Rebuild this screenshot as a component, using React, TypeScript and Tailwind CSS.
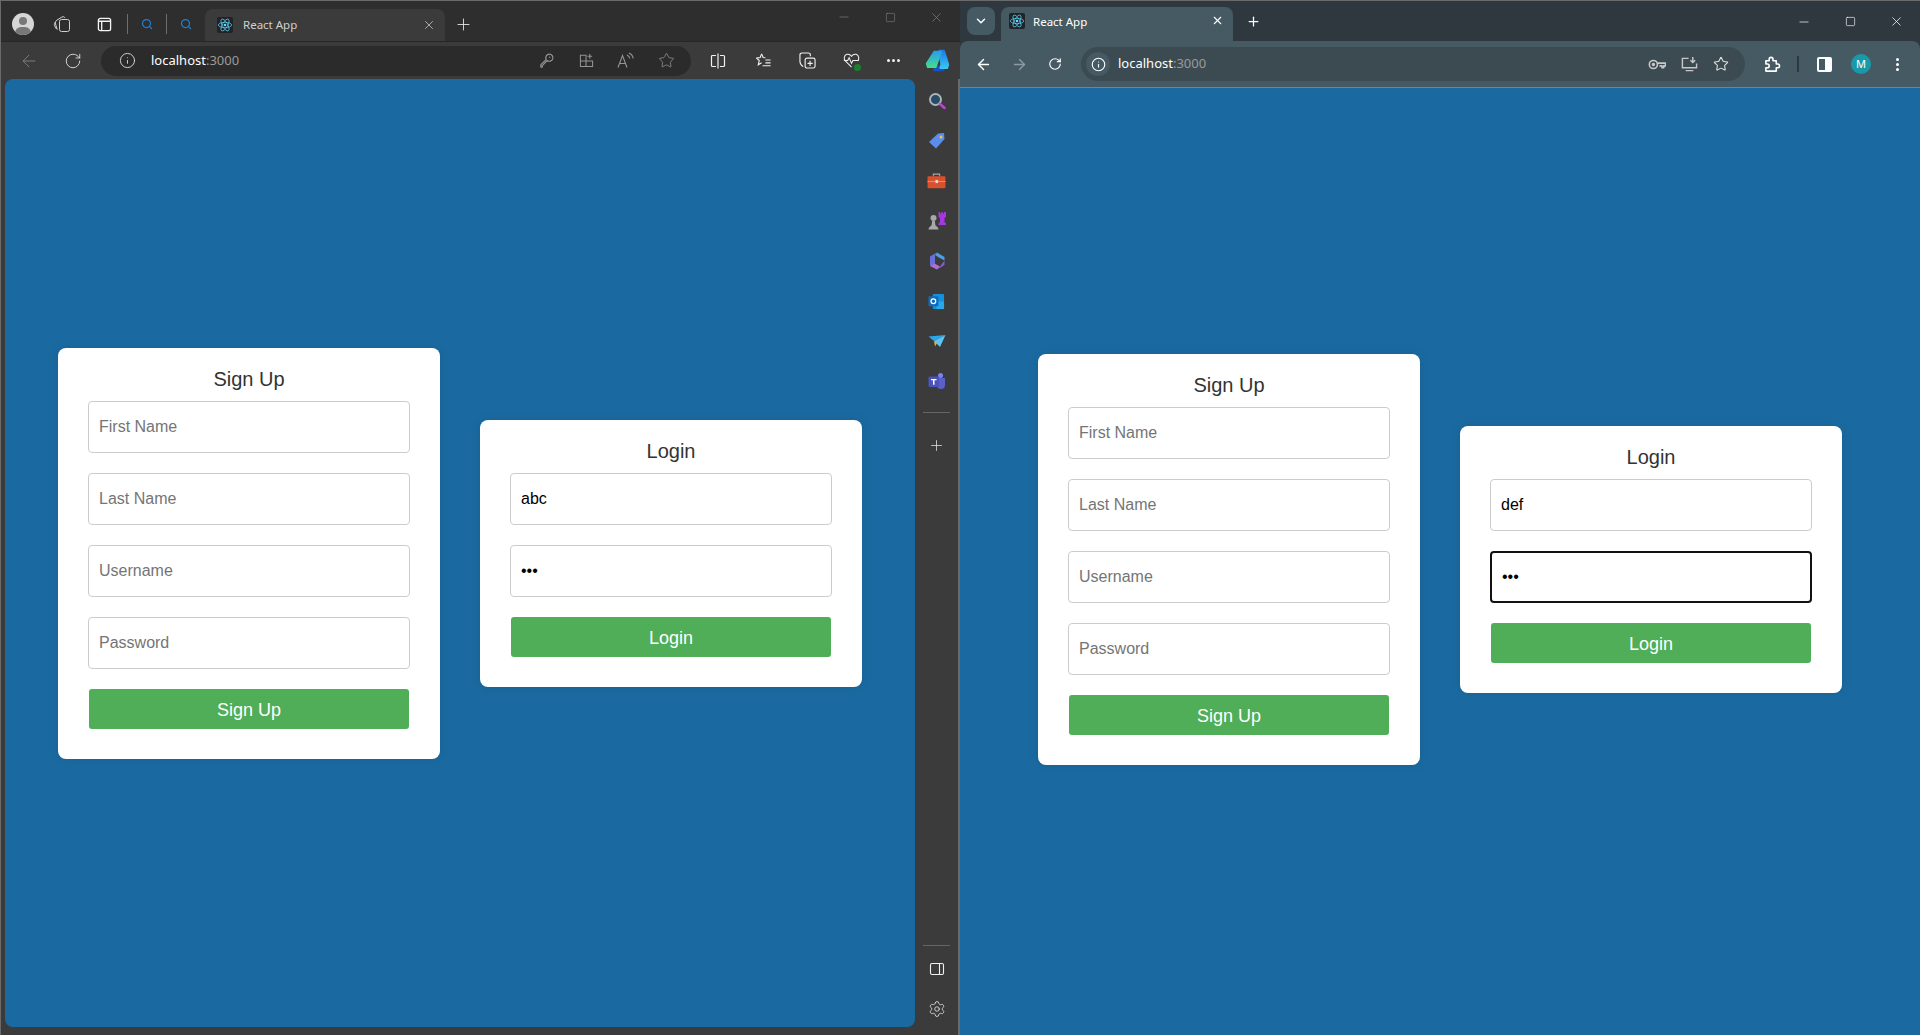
import React from 'react';
import { ArrowLeft, ArrowRight, ChevronDown, Info, Minus, Plus, RotateCw, Search, Settings, Square, Star, X } from 'lucide-react';

const sans = 'font-["Liberation_Sans",Arial,sans-serif]';
const ui = 'font-["Noto_Sans",sans-serif]';

function ReactIcon() {
  return (
    <div className="w-4 h-4 shrink-0 bg-[#20232a] rounded-[2px] flex items-center justify-center">
      <svg viewBox="-12 -12 24 24" className="w-4 h-4" fill="none" stroke="#61dafb" strokeWidth="1">
        <circle r="2" fill="#61dafb" stroke="none" />
        <ellipse rx="10" ry="4" />
        <ellipse rx="10" ry="4" transform="rotate(60)" />
        <ellipse rx="10" ry="4" transform="rotate(120)" />
      </svg>
    </div>
  );
}

function Box({ w, children }: { w: string; children?: React.ReactNode }) {
  return <div className={`${w} h-full shrink-0 flex items-center justify-center`}>{children}</div>;
}

function Field({ placeholder, value, type = 'text', focused = false }: { placeholder?: string; value?: string; type?: string; focused?: boolean }) {
  return (
    <input
      type={type}
      placeholder={placeholder}
      defaultValue={value}
      className={`w-full h-[52px] px-[10px] rounded-[4px] bg-white text-[16px] text-black placeholder:text-[#757575] outline-none ${sans} ${
        focused ? 'border-2 border-[#111111]' : 'border border-[#cccccc]'
      }`}
    />
  );
}

function Card({ title, children }: { title: string; children: React.ReactNode }) {
  return (
    <div className="w-[382px] px-[30px] pt-[20px] pb-[30px] bg-white rounded-[8px] shadow-[0_0_10px_rgba(0,0,0,0.1)]">
      <h2 className={`text-[20px] leading-[23px] mb-[10px] text-center text-[#333333] ${sans}`}>{title}</h2>
      <div className="flex flex-col gap-[20px]">{children}</div>
    </div>
  );
}

function Submit({ label }: { label: string }) {
  return (
    <button className={`mx-px h-[40px] pt-[3px] rounded-[3px] bg-[#4fae57] text-white text-[18px] ${sans}`}>{label}</button>
  );
}

function Forms({ user, focused }: { user: string; focused: boolean }) {
  return (
    <div className="flex items-center justify-center gap-[40px]">
      <Card title="Sign Up">
        <Field placeholder="First Name" />
        <Field placeholder="Last Name" />
        <Field placeholder="Username" />
        <Field placeholder="Password" />
        <Submit label="Sign Up" />
      </Card>
      <Card title="Login">
        <Field value={user} />
        <Field value="abc" type="password" focused={focused} />
        <Submit label="Login" />
      </Card>
    </div>
  );
}

function Url({ className }: { className: string }) {
  return (
    <span className={`text-[13px] text-white ${ui} ${className}`}>
      localhost<span className="text-[#9a9a9a]">:3000</span>
    </span>
  );
}

function SidebarIcon({ children }: { children: React.ReactNode }) {
  return <div className="h-[40px] flex items-center justify-center">{children}</div>;
}

function EdgeWindow() {
  return (
    <div className="w-[960px] h-full flex flex-col bg-[#3b3b3b] border-l border-t border-[#6a6a6a]">
      {/* tab strip */}
      <div className="h-[40px] shrink-0 flex items-end bg-[#2e2e2e] pl-[11px]">
        <div className="flex h-[32px] items-center flex-1 -translate-y-px">
          <Box w="w-[22px]">
            <div className="relative w-[22px] h-[22px] rounded-full bg-[#d6d6d6] overflow-hidden">
              <div className="absolute left-[7px] top-[4px] w-2 h-2 rounded-full bg-[#787878]" />
              <div className="absolute left-[3px] top-[14px] w-4 h-3 rounded-full bg-[#787878]" />
            </div>
          </Box>
          <Box w="w-[7px]" />
          <Box w="w-[42px]">
            <svg viewBox="0 0 18 18" className="w-[18px] h-[18px]" fill="none" stroke="#d0d0d0" strokeWidth="1">
              <rect x="6.500" y="4.500" width="10" height="12" rx="2" />
              <path d="M4.500 14.500c-1.200-.5-2-1.500-3-4-.5-1.500 0-2.500 1-3.500M4 14l-1.500-5c-.5-1.500 0-3 1.500-4l5-3c1.500-.8 2.500 0 3 1" />
            </svg>
          </Box>
          <Box w="w-[43px]">
            <svg viewBox="0 0 16 16" className="w-[15px] h-[15px]" fill="none" stroke="#f4f4f4" strokeWidth="1.400">
              <rect x="1.500" y="1.500" width="13" height="13" rx="2" />
              <path d="M1.500 4.500h13M5 4.500v10" />
            </svg>
          </Box>
          <div className="w-px h-[20px] bg-[#6f6f6f] ml-[1px]" />
          <Box w="w-[38px]"><Search size={12} strokeWidth={2.500} className="text-[#1f7fd0]" /></Box>
          <div className="w-px h-[20px] bg-[#6f6f6f]" />
          <Box w="w-[38px]"><Search size={12} strokeWidth={2.500} className="text-[#1f7fd0]" /></Box>
          <div className="w-[240px] h-[32px] shrink-0 -mb-[2px] rounded-t-[8px] bg-[#3b3b3b] flex items-center pl-[12px] pr-[9px]">
            <ReactIcon />
            <span className={`ml-[10px] text-[11.500px] text-[#cfcfcf] flex-1 ${ui}`}>React App</span>
            <X size={14} strokeWidth={1.300} className="text-[#cfcfcf]" />
          </div>
          <Box w="w-[36px]"><Plus size={19} strokeWidth={1.100} className="text-[#e8e8e8]" /></Box>
          <div className="flex-1" />
        </div>
        <div className="flex h-[32px] self-start items-center">
          <Box w="w-[46px]"><Minus size={14} strokeWidth={1} className="text-[#8a8a8a]" /></Box>
          <Box w="w-[46px]"><Square size={11} strokeWidth={1.200} className="text-[#8a8a8a]" /></Box>
          <Box w="w-[46px]"><X size={15} strokeWidth={1} className="text-[#8a8a8a]" /></Box>
          <Box w="w-[1px]" />
        </div>
      </div>

      {/* toolbar */}
      <div className="h-[38px] shrink-0 flex items-center border-t border-[#262626] bg-[#3b3b3b]">
        <Box w="w-[56px]"><ArrowLeft size={20} strokeWidth={1} className="text-[#8a8a8a]" /></Box>
        <Box w="w-[32px]"><RotateCw size={18} strokeWidth={1.100} className="text-[#f0f0f0]" /></Box>
        <div className="ml-[12px] w-[590px] h-[30px] shrink-0 rounded-full bg-[#2b2b2b] flex items-center">
          <Box w="w-[52px]"><Info size={17} strokeWidth={1.200} className="text-[#e8e8e8]" /></Box>
          <Url className="-ml-[2px] flex-1" />
          <Box w="w-[40px]">
            <svg viewBox="0 0 16 16" className="w-[15px] h-[15px]" fill="none" stroke="#959595" strokeWidth="1.200">
              <path d="M11 1.200a3.800 3.800 0 1 1-2.300 6.800L3.500 13.500v1.500H2v-2.500L7.700 6.800A3.800 3.800 0 0 1 11 1.200z" strokeLinejoin="round" />
              <circle cx="11.500" cy="4.500" r="0.700" fill="#959595" stroke="none" />
            </svg>
          </Box>
          <Box w="w-[40px]">
            <svg viewBox="0 0 16 16" className="w-[15px] h-[15px]" fill="none" stroke="#959595" strokeWidth="1.100">
              <path d="M1.500 2.500h6v12h-6zM1.500 8.500h13v6h-7M11.500 1v5M9 3.500h5" />
            </svg>
          </Box>
          <Box w="w-[40px]">
            <svg viewBox="0 0 18 18" className="w-[18px] h-[18px]" fill="none" stroke="#959595" strokeWidth="1.100">
              <path d="M1 15.500 5.500 3.500 10 15.500M2.800 11.500h5.400M10 3c1.500.6 2.500 1.800 2.800 3.500M12 1c2.200 1 3.800 2.800 4.200 5.500" />
            </svg>
          </Box>
          <Box w="w-[40px]"><Star size={17} strokeWidth={1.100} className="text-[#959595]" /></Box>
          <Box w="w-[5px]" />
        </div>
        <Box w="w-[54px]">
          <svg viewBox="0 0 16 16" className="w-[16px] h-[16px]" fill="none" stroke="#f0f0f0" strokeWidth="1.200">
            <path d="M6 2.500H2.500a1 1 0 0 0-1 1v9a1 1 0 0 0 1 1H6M10 2.500h3.500a1 1 0 0 1 1 1v9a1 1 0 0 1-1 1H10M8 .500v15" />
          </svg>
        </Box>
        <Box w="w-[36px]">
          <svg viewBox="0 0 18 18" className="w-[17px] h-[17px]" fill="none" stroke="#f0f0f0" strokeWidth="1.200">
            <path d="M7 2 8.600 5.800l2.400.3M1.500 6.500l3 2.500-1 4.500L7 11.500M11 8.500h5.500M11 11.500h5.500M8 14.500h8.500" />
            <path d="M7 2 5.500 5.800l-4 .7" />
          </svg>
        </Box>
        <Box w="w-[52px]">
          <svg viewBox="0 0 18 18" className="w-[17px] h-[17px]" fill="none" stroke="#f0f0f0" strokeWidth="1.200">
            <rect x="6.500" y="6.500" width="10.500" height="10.500" rx="2" />
            <path d="M11.700 9.200v5.600M9 12h5.500M12 4.500V3a2 2 0 0 0-2-2H3a2 2 0 0 0-2 2v7c0 2.500 2 4.500 3.500 5.500" />
          </svg>
        </Box>
        <Box w="w-[36px]">
          <div className="relative">
            <svg viewBox="0 0 18 18" className="w-[17px] h-[17px]" fill="none" stroke="#f0f0f0" strokeWidth="1.100">
              <path d="M9 16 2.500 9.500C.5 7.500 1 3.500 4 2.500c2-.6 3.800.3 5 2 1.200-1.700 3-2.600 5-2 3 1 3.500 5 1.500 7" />
              <path d="M1 9h4l1.500-3 2.500 6 1.500-3h6" />
            </svg>
            <div className="absolute -right-[1px] -bottom-[2px] w-[7px] h-[7px] rounded-full bg-[#1d7f2e]" />
          </div>
        </Box>
        <Box w="w-[48px]">
          <div className="flex gap-[2px]">
            <div className="w-[3px] h-[3px] rounded-full bg-[#f0f0f0]" />
            <div className="w-[3px] h-[3px] rounded-full bg-[#f0f0f0]" />
            <div className="w-[3px] h-[3px] rounded-full bg-[#f0f0f0]" />
          </div>
        </Box>
        <Box w="w-[40px]">
          <svg viewBox="0 0 24 24" className="w-[25px] h-[25px]" strokeLinejoin="round" strokeWidth="2.500">
            <defs>
              <linearGradient id="cpa" x1="0" y1="0" x2="0" y2="1">
                <stop offset="0" stopColor="#27a3e8" />
                <stop offset="1" stopColor="#45d98f" />
              </linearGradient>
              <linearGradient id="cpb" x1="0" y1="0" x2="0" y2="1">
                <stop offset="0" stopColor="#1f7be6" />
                <stop offset="1" stopColor="#38c4f4" />
              </linearGradient>
            </defs>
            <path d="M9 21h8l1-3H10z" fill="#1b4fc4" stroke="#1b4fc4" />
            <path d="M14 3h4l4 13-1 3h-6l1-3z" fill="url(#cpb)" stroke="url(#cpb)" />
            <path d="M9 4h6l-5 14H3l-1-3z" fill="url(#cpa)" stroke="url(#cpa)" />
          </svg>
        </Box>
      </div>

      {/* page + sidebar */}
      <div className="flex-1 flex min-h-0">
        <div className="w-[910px] ml-[4px] mb-[8px] rounded-[8px] bg-[#1a6aa1] flex items-center justify-center">
          <Forms user="abc" focused={false} />
        </div>
        <div className="flex-1 flex flex-col pt-[2px] pb-[6px]">
          <SidebarIcon>
            <svg viewBox="0 0 18 18" className="w-[18px] h-[18px]" fill="none">
              <circle cx="7.500" cy="7.500" r="5.500" stroke="#a9b4bd" strokeWidth="2" fill="#2b4a63" />
              <path d="m12 12 4.500 4" stroke="#c542d8" strokeWidth="2.500" strokeLinecap="round" />
            </svg>
          </SidebarIcon>
          <SidebarIcon>
            <svg viewBox="0 0 18 18" className="w-[18px] h-[18px]">
              <path d="M1 10 10 1.500l6-.5.500 6-8.500 9.500z" fill="#5b8def" />
              <circle cx="13" cy="5" r="1.500" fill="#e8c84a" />
            </svg>
          </SidebarIcon>
          <SidebarIcon>
            <svg viewBox="0 0 18 18" className="w-[19px] h-[19px]">
              <path d="M6 4V2h6v2" fill="none" stroke="#a8a8a8" strokeWidth="1" />
              <rect x="0.500" y="4" width="17" height="11.500" rx="1" fill="#d9512c" />
              <rect x="0.500" y="8.500" width="17" height="1" fill="#f08a5d" />
              <rect x="8" y="7.500" width="2.500" height="3" fill="#d8d8d8" />
            </svg>
          </SidebarIcon>
          <SidebarIcon>
            <svg viewBox="0 0 20 20" className="w-[20px] h-[20px]">
              <circle cx="6.500" cy="7" r="3" fill="#a8a8a8" />
              <path d="M1.500 18.500c0-2 1.500-3 3-4l.7-4.500h2.600l.7 4.500c1.500 1 3 2 3 4z" fill="#a8a8a8" />
              <path d="M11.500 1h1.500v1.500h1.200V1h1.600v1.500h1.200V1H19v5l-1.500 1v4l1.500 1.500v1.500h-7.500v-1.500L13 11V7l-1.500-1z" fill="#a438df" />
            </svg>
          </SidebarIcon>
          <SidebarIcon>
            <svg viewBox="0 0 18 18" className="w-[18px] h-[18px]">
              <path d="M9 .500 16.500 5v3.500L11 5.500 7 3z" fill="#4aa0e6" />
              <path d="M2 4.500 9 .500 7 3v9L2 14z" fill="#6a6fd8" />
              <path d="M2 14l4.500-2.500L12 14.500l-3 3z" fill="#b16fd0" />
              <path d="M16.500 8.500V13L9 17.500l3-3z" fill="#8a5cd0" />
            </svg>
          </SidebarIcon>
          <SidebarIcon>
            <svg viewBox="0 0 18 18" className="w-[17px] h-[17px]">
              <rect x="5" y="1" width="12" height="16" rx="1" fill="#1490df" />
              <path d="M9 9h8v8H9z" fill="#28a8ea" />
              <rect x="0.500" y="3.500" width="10.500" height="10.500" rx="1" fill="#0f6cbd" />
              <circle cx="5.700" cy="8.700" r="2.500" fill="none" stroke="#ffffff" strokeWidth="1.300" />
            </svg>
          </SidebarIcon>
          <SidebarIcon>
            <svg viewBox="0 0 18 18" className="w-[18px] h-[18px]">
              <path d="M0.500 4.500 17.500 3 6 9z" fill="#2aa7e8" />
              <path d="M6 9 17.500 3 12 15z" fill="#5cc3f2" />
              <path d="M6 9l1 5.500 2-3.500z" fill="#f0b323" />
            </svg>
          </SidebarIcon>
          <SidebarIcon>
            <svg viewBox="0 0 18 18" className="w-[18px] h-[18px]">
              <circle cx="12.500" cy="3.500" r="2.500" fill="#7b83eb" />
              <path d="M7 6h10v7a4 4 0 0 1-8 0z" fill="#5b5fc7" />
              <rect x="0.500" y="4.500" width="10.500" height="10.500" rx="1" fill="#4b53bc" />
              <path d="M3 7h5.500v1.300H6.500v4.500H5V8.300H3z" fill="#ffffff" />
            </svg>
          </SidebarIcon>
          <div className="h-px mx-[8px] mt-[11px] bg-[#666666]" />
          <div className="mt-[12px]">
            <SidebarIcon><Plus size={17} strokeWidth={1.100} className="text-[#e4e4e4]" /></SidebarIcon>
          </div>
          <div className="mt-auto">
            <div className="h-px mx-[8px] mb-[3px] bg-[#666666]" />
            <SidebarIcon>
              <svg viewBox="0 0 16 16" className="w-[16px] h-[16px]" fill="none" stroke="#f0f0f0" strokeWidth="1.100">
                <rect x="1.500" y="2.500" width="13" height="11" rx="1.500" />
                <path d="M10.500 2.500v11" />
              </svg>
            </SidebarIcon>
            <SidebarIcon><Settings size={18} strokeWidth={1.100} className="text-[#e4e4e4]" /></SidebarIcon>
          </div>
        </div>
        <div className="w-[2px] bg-[#6a6a6a]" />
      </div>
    </div>
  );
}

function ChromeWindow() {
  return (
    <div className="w-[960px] h-full flex flex-col bg-[#2e383e] border-t border-[#6a6a6a]">
      {/* tab strip */}
      <div className="h-[40px] shrink-0 flex items-start pt-[6px] pl-[7px]">
        <div className="w-[28px] h-[28px] rounded-[8px] bg-[#465a64] flex items-center justify-center">
          <ChevronDown size={14} strokeWidth={2.500} className="text-white" />
        </div>
        <div className="ml-[6px] w-[232px] h-[34px] rounded-t-[8px] bg-[#465a64] flex items-start pt-[6px] pl-[8px] pr-[9px]">
          <ReactIcon />
          <span className={`ml-[8px] text-[11.500px] text-white flex-1 ${ui}`}>React App</span>
          <X size={13} strokeWidth={2} className="text-white mt-[1px]" />
        </div>
        <div className="ml-[12px] w-[16px] h-[28px] flex items-center justify-center">
          <Plus size={15} strokeWidth={2} className="text-white" />
        </div>
        <div className="flex-1" />
        <div className="flex h-[28px] pt-[1px] mr-[1px] items-center">
          <Box w="w-[46px]"><Minus size={14} strokeWidth={1.200} className="text-white" /></Box>
          <Box w="w-[46px]"><Square size={11} strokeWidth={1.400} className="text-white" /></Box>
          <Box w="w-[46px]"><X size={15} strokeWidth={1.200} className="text-white" /></Box>
        </div>
      </div>

      {/* toolbar */}
      <div className="h-[46px] shrink-0 flex items-center bg-[#465a64] rounded-t-[8px]">
        <Box w="w-[46px]"><ArrowLeft size={17} strokeWidth={2} className="text-white" /></Box>
        <Box w="w-[26px]"><ArrowRight size={17} strokeWidth={2} className="text-[#8c9aa2]" /></Box>
        <Box w="w-[46px]"><RotateCw size={14} strokeWidth={2} className="text-white" /></Box>
        <div className="ml-[3px] w-[664px] h-[34px] shrink-0 rounded-full bg-[#3c4a52] flex items-center pl-[5px]">
          <div className="w-[24px] h-[24px] rounded-full bg-[#465a64] flex items-center justify-center">
            <Info size={15} strokeWidth={1.800} className="text-white" />
          </div>
          <Url className="ml-[8px] flex-1" />
          <Box w="w-[32px]">
            <svg viewBox="0 0 20 14" className="w-[18px] h-[13px]" fill="none" stroke="#c8c8c8" strokeWidth="1.800">
              <circle cx="6" cy="7" r="4.500" />
              <circle cx="6" cy="7" r="1" fill="#c8c8c8" />
              <path d="M10.500 5.500h9v3h-2v2h-2v-2h-2v1" strokeLinejoin="round" />
            </svg>
          </Box>
          <Box w="w-[32px]">
            <svg viewBox="0 0 18 18" className="w-[17px] h-[17px]" fill="none" stroke="#c8c8c8" strokeWidth="1.500">
              <path d="M8 2.500H1.500v10h15V8M5 15.500h8M12.500 1v6M10 4.500 12.500 7 15 4.500" />
            </svg>
          </Box>
          <Box w="w-[32px]"><Star size={16} strokeWidth={1.600} className="text-[#e0e0e0]" /></Box>
          <Box w="w-[8px]" />
        </div>
        <Box w="w-[54px]">
          <svg viewBox="0 0 18 18" className="w-[17px] h-[17px]" fill="none" stroke="#ffffff" strokeWidth="1.700">
            <path d="M2 5h3.500V3.500a2 2 0 0 1 4 0V5H13v3.500h1.500a2 2 0 0 1 0 4H13V16H2v-3.500h1.500a2 2 0 0 0 0-4H2z" strokeLinejoin="round" />
          </svg>
        </Box>
        <div className="w-[2px] h-[16px] shrink-0 -ml-[2px] bg-[#2e383e]" />
        <Box w="w-[51px]">
          <div className="w-[15px] h-[15px] rounded-[2px] border-2 border-white flex justify-end">
            <div className="w-[5px] h-full bg-white" />
          </div>
        </Box>
        <Box w="w-[22px]">
          <div className={`w-[20px] h-[20px] rounded-full bg-[#1a9aa8] flex items-center justify-center text-[11px] text-white ${ui}`}>M</div>
        </Box>
        <div className="w-[46px] ml-[2px] h-full shrink-0 flex items-center justify-center">
          <div className="flex flex-col gap-[2px]">
            <div className="w-[3px] h-[3px] rounded-full bg-white" />
            <div className="w-[3px] h-[3px] rounded-full bg-white" />
            <div className="w-[3px] h-[3px] rounded-full bg-white" />
          </div>
        </div>
      </div>

      {/* page */}
      <div className="flex-1 min-h-0 bg-[#1a6aa1] border-t border-[#5d8aa6] flex items-center justify-center pb-[5px]">
        <Forms user="def" focused={true} />
      </div>
    </div>
  );
}

export default function App() {
  return (
    <div className="w-[1920px] h-[1035px] flex overflow-hidden bg-[#2b2b2b]">
      <EdgeWindow />
      <ChromeWindow />
    </div>
  );
}
